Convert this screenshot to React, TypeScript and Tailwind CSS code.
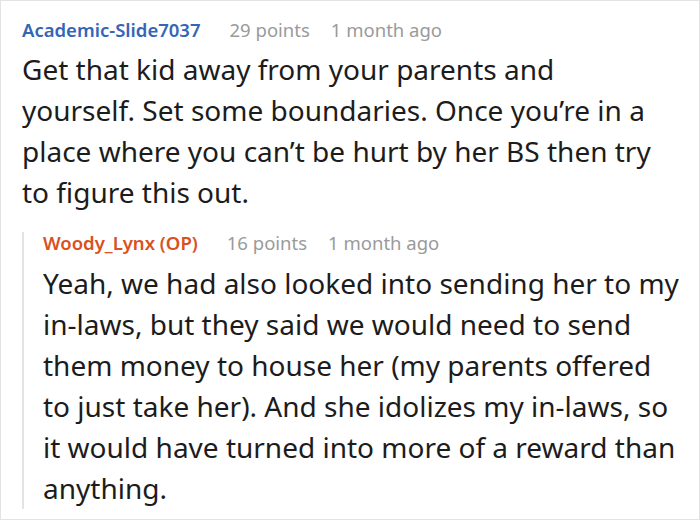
export default function App() {
  return (
    <div className="w-[700px] h-[520px] overflow-hidden bg-white border border-[#e3e3e3] font-['Noto_Sans',sans-serif] text-[#1c1c1c]">
      <div className="pl-[21px] pr-4 pt-[15px]">
        <div className="flex items-baseline text-[18.5px] leading-[28px]">
          <span className="font-semibold text-[#3565b5]">Academic-Slide7037</span>
          <span className="ml-[29px] text-[#9a9a9a]">29 points</span>
          <span className="ml-[21px] text-[#9a9a9a]">1 month ago</span>
        </div>
        <p className="mt-[5px] text-[28px] leading-[41px] w-[640px]">
          Get that kid away from your parents and yourself. Set some boundaries. Once you’re in a place where you can’t be hurt by her BS then try to figure this out.
        </p>
        <div className="mt-[19px] border-l-2 border-[#e3e3e3] pl-[19px]">
          <div className="flex items-baseline text-[18.5px] leading-[22px]">
            <span className="font-semibold text-[#d9511e]">Woody_Lynx (OP)</span>
            <span className="ml-[29px] text-[#9a9a9a]">16 points</span>
            <span className="ml-[21px] text-[#9a9a9a]">1 month ago</span>
          </div>
          <p className="mt-[9px] -mb-[7px] text-[28px] leading-[41px] w-[638px]">
            Yeah, we had also looked into sending her to my in-laws, but they said we would need to send them money to house her (my parents offered to just take her). And she idolizes my in-laws, so it would have turned into more of a reward than anything.
          </p>
        </div>
      </div>
    </div>
  );
}
